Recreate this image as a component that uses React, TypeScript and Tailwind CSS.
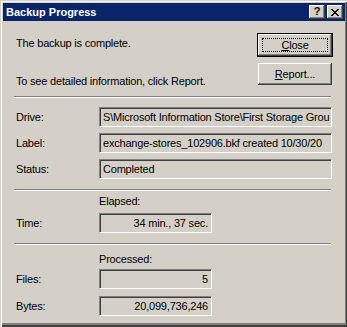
import React from 'react'

const bevel =
  'shadow-[inset_-1px_-1px_#404040,inset_1px_1px_#ffffff,inset_-2px_-2px_#808080,inset_2px_2px_#d4d0c8]'

function Field({ value, wide, right }: { value: string; wide?: boolean; right?: boolean }) {
  return (
    <div
      className={`h-[20px] ${wide ? 'w-[233px]' : 'w-[113px]'} flex items-center overflow-hidden whitespace-nowrap border border-t-[#808080] border-l-[#808080] border-b-white border-r-white shadow-[inset_1px_1px_#404040] ${
        right ? 'justify-end pr-[3px]' : 'pl-[3px]'
      }`}
    >
      {value}
    </div>
  )
}

function Row({ label, children }: { label: string; children: React.ReactNode }) {
  return (
    <div className="flex items-center">
      <div className="w-[83px]">{label}</div>
      {children}
    </div>
  )
}

function Separator() {
  return <div className="-ml-[2px] mr-[2px] border-t border-t-[#808080] border-b border-b-white" />
}

export default function App() {
  return (
    <div className="w-[347px] h-[327px] bg-[#d4d0c8] p-[3px] pr-[2px] pb-[4px] shadow-[inset_1px_1px_#d4d0c8,inset_2px_2px_#ffffff,inset_-1px_-2px_#404040,inset_-2px_-4px_#808080] font-['Liberation_Sans',Arial,sans-serif] text-[11px] tracking-[-0.2px] text-black leading-[13px] select-none">
      {/* Title bar */}
      <div className="h-[18px] bg-[#0a246a] flex items-center justify-between pl-[3px] pr-[2px]">
        <span className="text-white font-bold text-[11px] tracking-normal">Backup Progress</span>
        <div className="flex gap-[2px]">
          <div className={`w-[16px] h-[14px] bg-[#d4d0c8] ${bevel} flex items-center justify-center font-bold text-[11px] leading-none pb-[1px]`}>
            ?
          </div>
          <div className={`w-[16px] h-[14px] bg-[#d4d0c8] ${bevel} flex items-center justify-center`}>
            <svg width="8" height="7" viewBox="0 0 8 7" shapeRendering="crispEdges">
              <path d="M0 0h2v1h-2zM6 0h2v1h-2zM1 1h2v1h-2zM5 1h2v1h-2zM2 2h4v1h-4zM3 3h2v1h-2zM2 4h4v1h-4zM1 5h2v1h-2zM5 5h2v1h-2zM0 6h2v1h-2zM6 6h2v1h-2z" fill="#000" />
            </svg>
          </div>
        </div>
      </div>

      {/* Content */}
      <div className="pl-[13px] pr-[12px]">
        <div className="mt-[12px] flex items-start justify-between">
          <span className="mt-[4px]">The backup is complete.</span>
          <div className="w-[76px] h-[24px] border border-black">
            <div className={`w-full h-full ${bevel} flex items-center justify-center p-[4px]`}>
              <div className="w-full h-full border border-dotted border-black flex items-center justify-center">
                <span>
                  <span className="underline">C</span>lose
                </span>
              </div>
            </div>
          </div>
        </div>

        <div className="mt-[6px] flex items-start justify-between">
          <span className="mt-[12px]">To see detailed information, click Report.</span>
          <div className={`mr-[1px] w-[74px] h-[22px] ${bevel} flex items-center justify-center`}>
            <span>
              <span className="underline">R</span>eport...
            </span>
          </div>
        </div>

        <div className="mt-[8px]">
          <Separator />
        </div>

        <div className="mt-[9px] flex flex-col gap-[6px]">
          <Row label="Drive:">
            <Field wide value="S\Microsoft Information Store\First Storage Grou" />
          </Row>
          <Row label="Label:">
            <Field wide value="exchange-stores_102906.bkf created 10/30/20" />
          </Row>
          <Row label="Status:">
            <Field wide value="Completed" />
          </Row>
        </div>

        <div className="mt-[10px]">
          <Separator />
        </div>

        <div className="mt-[4px] pl-[83px]">Elapsed:</div>
        <div className="mt-[5px]">
          <Row label="Time:">
            <Field right value="34 min., 37 sec." />
          </Row>
        </div>

        <div className="mt-[10px]">
          <Separator />
        </div>

        <div className="mt-[8px] pl-[83px]">Processed:</div>
        <div className="mt-[3px] flex flex-col gap-[7px]">
          <Row label="Files:">
            <Field right value="5" />
          </Row>
          <Row label="Bytes:">
            <Field right value="20,099,736,246" />
          </Row>
        </div>
      </div>
    </div>
  )
}
